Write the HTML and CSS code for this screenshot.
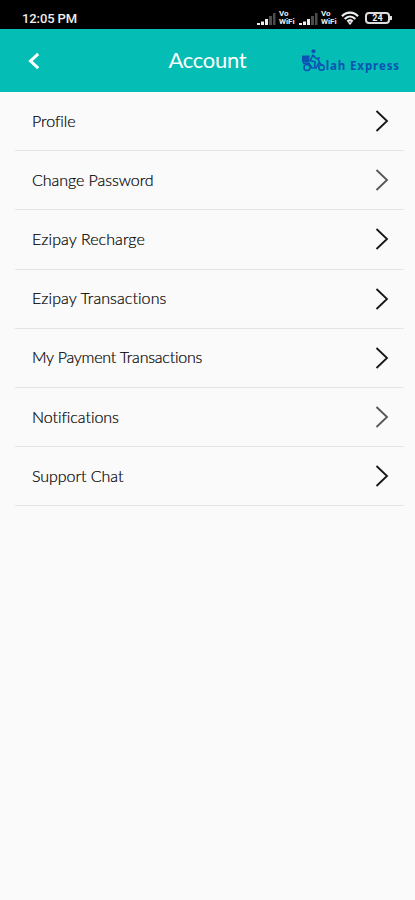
FILE: index.html
```html
<!DOCTYPE html>
<html lang="en">
<head>
    <meta charset="UTF-8">
    <meta name="viewport" content="width=device-width, initial-scale=1.0">
    <title>Account</title>
    <link rel="stylesheet" href="styles.css">
</head>
<body>
    <div class="status-bar">
        <span class="time">12:05 PM</span>
        <div class="status-icons">
            <svg class="signal" width="19" height="13" viewBox="0 0 19 13">
                <path d="M0 11h3v2H0zM4 9.500h3V13H4zM8 7h3v6H8z" fill="#eee"/>
                <path d="M12 4h3v9h-3zM16 1h2.500v12H16z" fill="#4c4c4c"/>
            </svg>
            <span class="vowifi"><span>Vo</span><span>WiFi</span></span>
            <svg class="signal second" width="19" height="13" viewBox="0 0 19 13">
                <path d="M0 11h3v2H0zM4 9.500h3V13H4zM8 7h3v6H8z" fill="#eee"/>
                <path d="M12 4h3v9h-3zM16 1h2.500v12H16z" fill="#4c4c4c"/>
            </svg>
            <span class="vowifi"><span>Vo</span><span>WiFi</span></span>
            <svg class="wifi" width="18" height="14" viewBox="0 0 18 14" fill="none" stroke="#eee" stroke-width="2.300">
                <path d="M1 5.200C5.500 .4 12.500 .4 17 5.200M3.700 8C7 4.700 11 4.700 14.300 8M6.300 10.500C8 8.900 10 8.900 11.700 10.500"/>
                <path d="M9 14l-2.500-2.800h5z" fill="#eee" stroke="none"/>
            </svg>
            <span class="battery">24</span>
        </div>
    </div>

    <header class="header">
        <a class="back" href="#" aria-label="Back">
            <svg width="12" height="18" viewBox="0 0 12 18">
                <path d="M10.200 1.800L2.500 9l7.700 7.200" fill="none" stroke="#fff" stroke-width="3"/>
            </svg>
        </a>
        <h1>Account</h1>
        <div class="logo">
            <svg width="25" height="23" viewBox="0 0 25 23" fill="none" stroke="#0b52b4" stroke-width="1.600">
                <path d="M1 6.500h7.500v7H1z" fill="#0b52b4" stroke="none"/>
                <circle cx="12.500" cy="2.300" r="2" fill="#0b52b4" stroke="none"/>
                <path d="M12 5.500l-2.700 6 5 1.500-.8 5M12 6l3 3.500 4-.5M2 14.500h6l3 4.500h4l3.500-6-2-4M18 13l3 4" stroke-linejoin="round"/>
                <circle cx="6" cy="18.500" r="3"/>
                <circle cx="20.500" cy="18.500" r="2.700"/>
            </svg>
            <span>lah Express</span>
        </div>
    </header>

    <ul class="menu">
        <li><a href="#"><span>Profile</span><svg width="14" height="22" viewBox="0 0 14 22"><path d="M1.500 1l10.500 10L1.500 21"/></svg></a></li>
        <li><a class="soft" href="#"><span>Change Password</span><svg width="14" height="22" viewBox="0 0 14 22"><path d="M1.500 1l10.500 10L1.500 21"/></svg></a></li>
        <li><a href="#"><span class="ezipay">Ezipay Recharge</span><svg width="14" height="22" viewBox="0 0 14 22"><path d="M1.500 1l10.500 10L1.500 21"/></svg></a></li>
        <li><a href="#"><span class="ezipay">Ezipay Transactions</span><svg width="14" height="22" viewBox="0 0 14 22"><path d="M1.500 1l10.500 10L1.500 21"/></svg></a></li>
        <li><a href="#"><span class="payment">My Payment Transactions</span><svg width="14" height="22" viewBox="0 0 14 22"><path d="M1.500 1l10.500 10L1.500 21"/></svg></a></li>
        <li><a class="soft" href="#"><span>Notifications</span><svg width="14" height="22" viewBox="0 0 14 22"><path d="M1.500 1l10.500 10L1.500 21"/></svg></a></li>
        <li><a href="#"><span>Support Chat</span><svg width="14" height="22" viewBox="0 0 14 22"><path d="M1.500 1l10.500 10L1.500 21"/></svg></a></li>
    </ul>
</body>
</html>
```
FILE: styles.css
```css
* {
    box-sizing: border-box;
}
body {
    margin: 0;
    min-height: 100vh;
    background-color: #fafafa;
    font-family: Lato, sans-serif;
    color: #222;
}
.status-bar {
    display: flex;
    justify-content: space-between;
    height: 29px;
    padding: 11px 23px 0 22px;
    background-color: #000;
    color: #eee;
}
.time {
    font: 500 13px/16px Roboto, sans-serif;
    letter-spacing: -0.1px;
}
.status-icons {
    display: flex;
    align-items: flex-start;
}
.signal {
    margin-top: 1px;
}
.second {
    margin-left: 2px;
}
.vowifi {
    display: flex;
    flex-direction: column;
    width: 18px;
    margin: -1px 0 0 3px;
    font: 700 8px/8px Roboto, sans-serif;
}
.wifi {
    margin-left: 2px;
}
.battery {
    position: relative;
    width: 25px;
    height: 12px;
    margin: 1px 2px 0 6px;
    border: 2px solid #ddd;
    border-radius: 4px;
    font: 700 9px/8px Roboto, sans-serif;
    text-align: center;
}
.battery::after {
    content: "";
    position: absolute;
    top: 2px;
    right: -4px;
    width: 2px;
    height: 4px;
    background-color: #ddd;
}
.header {
    display: grid;
    grid-template-columns: 100px 1fr 100px;
    align-items: center;
    height: 63px;
    padding: 0 15px;
    background-color: #04bdb4;
}
.back {
    display: flex;
    padding-left: 13px;
}
.header h1 {
    margin: 0;
    padding-bottom: 2px;
    font-size: 22px;
    font-weight: 400;
    line-height: 28px;
    letter-spacing: -0.3px;
    text-align: center;
    color: #fff;
}
.logo {
    display: flex;
    align-items: center;
    justify-content: flex-end;
    color: #0b52b4;
    white-space: nowrap;
}
.logo svg {
    flex-shrink: 0;
}
.logo span {
    padding-top: 10px;
    font: 700 11.5px/14px "Noto Sans", sans-serif;
    letter-spacing: 0.9px;
}
.menu {
    margin: 0;
    padding: 0 11px 0 15px;
    list-style: none;
}
.menu li {
    height: 59.2px;
    border-bottom: 1px solid #e5e5e5;
}
.menu a {
    display: flex;
    align-items: center;
    justify-content: space-between;
    height: 100%;
    padding: 0 15px 2px 17px;
    font-size: 16px;
    font-weight: 300;
    font-variant-ligatures: none;
    letter-spacing: -0.05px;
    color: #000;
    text-decoration: none;
    -webkit-text-stroke: 0.2px #000;
}
.menu .ezipay {
    letter-spacing: 0.08px;
}
.menu .payment {
    letter-spacing: -0.22px;
}
.menu svg {
    margin-top: 2px;
    fill: none;
    stroke: #151515;
    stroke-width: 1.8;
}
.menu .soft svg {
    stroke: #555;
}
```
